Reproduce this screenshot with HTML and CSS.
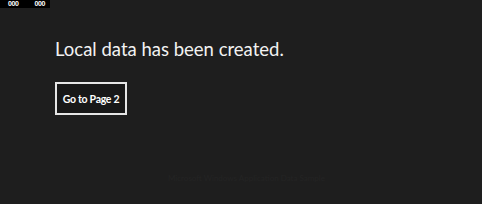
FILE: index.html
```html
<!DOCTYPE html>
<html>
<head>
<meta charset="utf-8">
<link rel="stylesheet" href="styles.css">
</head>
<body>
<div class="counter"><span>000</span><span>000</span></div>
<main class="content">
  <h1 class="title">Local data has been created.</h1>
  <button class="btn">Go to Page 2</button>
</main>
<div class="footer">Microsoft Windows Application Data Sample</div>
</body>
</html>
```
FILE: styles.css
```css
html, body {
  margin: 0;
  padding: 0;
  background: #1e1e1e;
  width: 482px;
  height: 204px;
  overflow: hidden;
  font-family: "Lato", "Noto Sans", sans-serif;
  color: #ffffff;
}
body { position: relative; }
.counter {
  position: absolute;
  left: 0;
  top: 0;
  width: 50px;
  height: 8px;
  background: #000;
  display: flex;
  gap: 16px;
  padding-left: 8px;
  box-sizing: border-box;
  font-family: "Liberation Sans", sans-serif;
  font-weight: 700;
  font-size: 7px;
  line-height: 7px;
  letter-spacing: -0.4px;
  color: #fff;
}
.content {
  padding: 36px 0 0 55px;
}
.title {
  margin: 0;
  font-weight: 400;
  font-size: 18.5px;
  line-height: 26px;
  color: #f2f2f2;
}
.btn {
  margin-top: 20px;
  width: 72px;
  height: 33px;
  padding: 0;
  background: #181818;
  border: 2px solid #e6e6e6;
  color: #ffffff;
  font-family: "Lato", "Noto Sans", sans-serif;
  font-weight: 700;
  font-size: 10.5px;
  letter-spacing: -0.3px;
}
.footer {
  position: absolute;
  left: 168px;
  top: 173px;
  font-size: 8px;
  color: #242424;
}
```
